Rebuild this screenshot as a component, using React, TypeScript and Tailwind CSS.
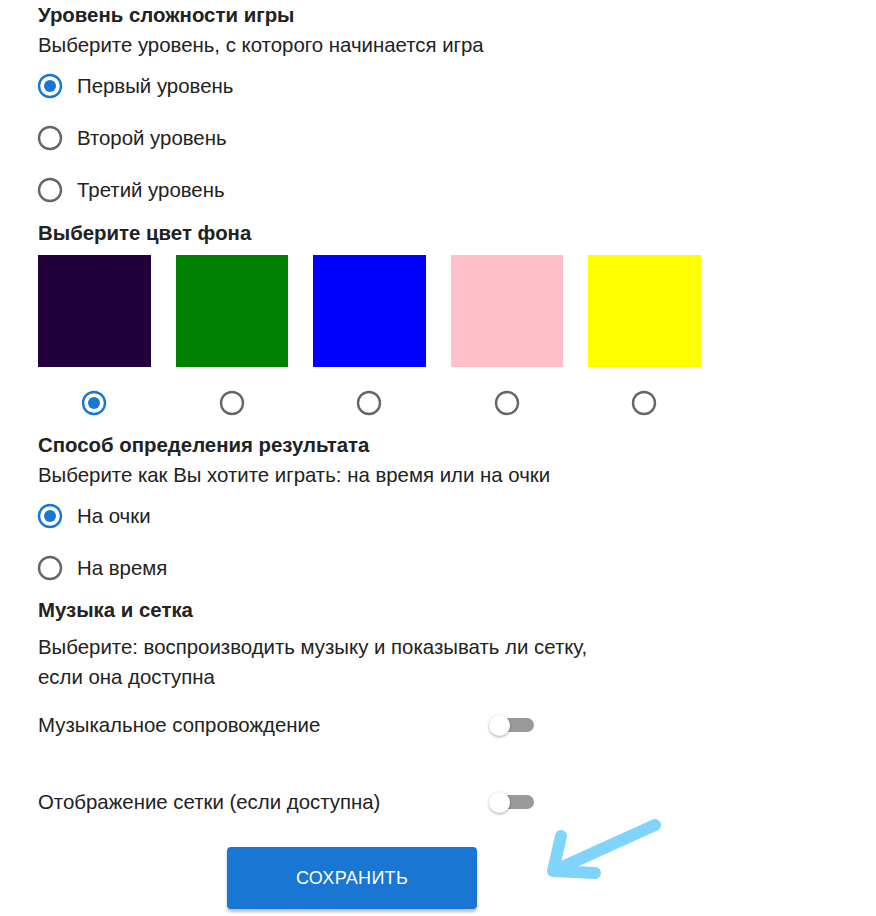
import React from "react";

function Radio({ checked }: { checked?: boolean }) {
  return (
    <svg width="26" height="26" viewBox="0 0 26 26" className="block">
      <circle cx="13" cy="13" r="11" fill="none" stroke={checked ? "#1976d2" : "#666666"} strokeWidth="2.4" />
      {checked && <circle cx="13" cy="13" r="6" fill="#1976d2" />}
    </svg>
  );
}

function RadioRow({ label, checked }: { label: string; checked?: boolean }) {
  return (
    <div className="flex h-[52px] items-center">
      <div className="ml-[-1px] flex w-[40px] items-center">
        <Radio checked={checked} />
      </div>
      <span className="text-[20.4px] leading-[30px] text-[#222222]">{label}</span>
    </div>
  );
}

function Switch() {
  return (
    <div className="relative h-[20px] w-[46px]">
      <div className="absolute left-[10px] top-[3px] h-[14px] w-[35px] rounded-full bg-[#9a9a9a]" />
      <div className="absolute left-0 top-0 h-[21px] w-[21px] rounded-full bg-white shadow-[0_1px_3px_rgba(0,0,0,0.35)]" />
    </div>
  );
}

const colors = ["#22003c", "#008000", "#0000ff", "#ffc0cb", "#ffff00"];

export default function App() {
  return (
    <div
      className="relative h-[916px] w-[876px] overflow-hidden bg-white pl-[38px] text-[#222222]"
      style={{ fontFamily: '"Liberation Sans", Arial, sans-serif' }}
    >
      <div className="text-[20.4px] font-bold leading-[30px]">Уровень сложности игры</div>
      <div className="text-[20.4px] leading-[30px]">Выберите уровень, с которого начинается игра</div>
      <RadioRow label="Первый уровень" checked />
      <RadioRow label="Второй уровень" />
      <RadioRow label="Третий уровень" />

      <div className="mt-[2px] text-[20.4px] font-bold leading-[30px]">Выберите цвет фона</div>
      <div className="mt-[7px] flex gap-[25px]">
        {colors.map((c, i) => (
          <div key={c} className="flex w-[112.5px] flex-col items-center">
            <div className="h-[112px] w-[112.5px]" style={{ backgroundColor: c }} />
            <div className="mt-[23px]">
              <Radio checked={i === 0} />
            </div>
          </div>
        ))}
      </div>

      <div className="mt-[14px] text-[20.4px] font-bold leading-[30px]">Способ определения результата</div>
      <div className="text-[20.4px] leading-[30px]">Выберите как Вы хотите играть: на время или на очки</div>
      <RadioRow label="На очки" checked />
      <RadioRow label="На время" />

      <div className="mt-[1px] text-[20.4px] font-bold leading-[30px]">Музыка и сетка</div>
      <div className="mt-[7px] w-[580px] text-[20.4px] leading-[30px]">
        Выберите: воспроизводить музыку и показывать ли сетку, если она доступна
      </div>

      <div className="mt-[18px] flex h-[30px] w-[497px] items-center justify-between">
        <span className="text-[20.4px] leading-[30px]">Музыкальное сопровождение</span>
        <Switch />
      </div>
      <div className="mt-[47px] flex h-[30px] w-[497px] items-center justify-between">
        <span className="text-[20.4px] leading-[30px]">Отображение сетки (если доступна)</span>
        <Switch />
      </div>

      <div className="ml-[189px] mt-[30px] flex h-[62px] w-[250px] items-center justify-center rounded-[4px] bg-[#1976d2] text-[18px] tracking-[0.3px] text-white shadow-[0_3px_3px_rgba(0,0,0,0.25)]">
        СОХРАНИТЬ
      </div>

      <svg className="absolute left-[530px] top-[805px]" width="150" height="90" viewBox="530 805 150 90">
        <g stroke="#80d4fc" strokeWidth="12" strokeLinecap="round" strokeLinejoin="round" fill="none">
          <path d="M655 825 L560 868" />
          <path d="M561 836 L553 871 L595 873" />
        </g>
      </svg>
    </div>
  );
}
